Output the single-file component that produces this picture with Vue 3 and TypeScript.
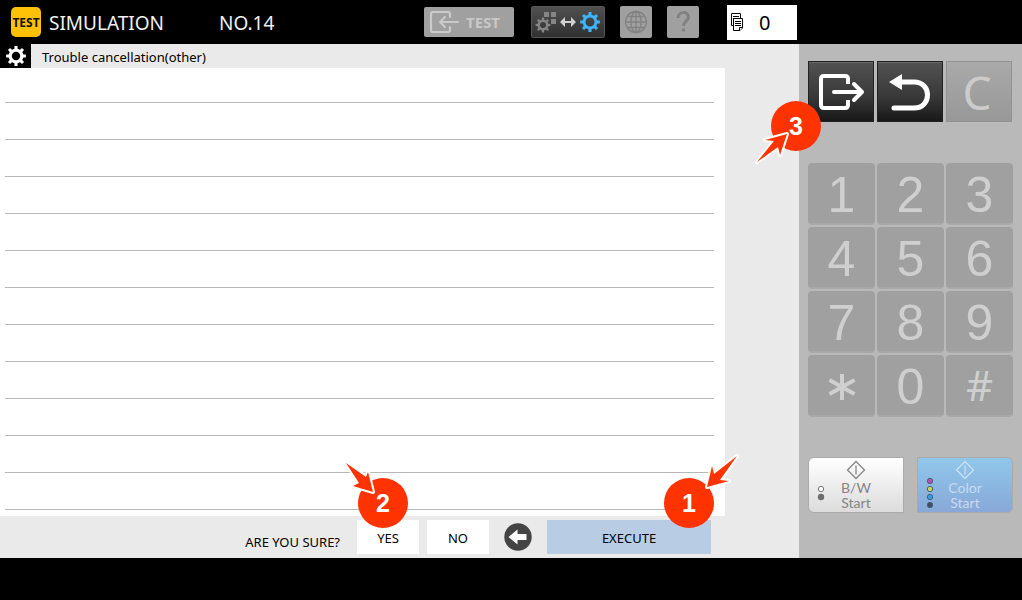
<script setup lang="ts">
interface Arrow {
  points: string
}

const rows = 12
const digits: string[] = ['1', '2', '3', '4', '5', '6', '7', '8', '9', '*', '0', '#']

const arrows: Record<'execute' | 'yes' | 'exit', Arrow> = {
  execute: { points: '73,-22 56,2 65,3 43,9 48,-12 50,-4' },
  yes: { points: '-12,-15 8,-1 10,-6 15,14 -5,8 1,5' },
  exit: { points: '-14,61 3,40 -6,39 16,33 9,54 7,46' },
}

// Outline of a cog centred on the origin, with a round hole.
function gear(outer: number, inner: number, hole: number): string {
  const teeth = 8
  const step = (Math.PI * 2) / teeth
  const points: string[] = []
  for (let i = 0; i < teeth; i++) {
    const a = i * step
    const corners: [number, number][] = [
      [inner, a - step * 0.27],
      [outer, a - step * 0.19],
      [outer, a + step * 0.19],
      [inner, a + step * 0.27],
    ]
    for (const [r, t] of corners) {
      points.push(`${(r * Math.cos(t)).toFixed(2)} ${(r * Math.sin(t)).toFixed(2)}`)
    }
  }
  return `M${points.join('L')}ZM${hole} 0A${hole} ${hole} 0 1 0 ${-hole} 0A${hole} ${hole} 0 1 0 ${hole} 0Z`
}
</script>

<template>
  <div class="panel">
    <header class="topbar">
      <span class="badge">TEST</span>
      <h1 class="title">SIMULATION</h1>
      <span class="number">NO.14</span>
      <div class="tools">
        <button class="tool test" type="button">
          <svg width="32" height="24" viewBox="0 0 32 24" fill="none" stroke="#cacaca" stroke-width="2.2" stroke-linecap="round" stroke-linejoin="round">
            <path d="M21 7V4Q21 2 19 2H4Q2 2 2 4V20Q2 22 4 22H19Q21 22 21 20V17" />
            <path d="M29 12H11M16 7L11 12L16 17" />
          </svg>
          <span>TEST</span>
        </button>
        <button class="tool switch" type="button" aria-label="Switch mode">
          <svg width="72" height="30" viewBox="0 0 72 30">
            <path :d="gear(7.5, 5.5, 3)" transform="translate(11 18)" fill="#858585" fill-rule="evenodd" />
            <path d="M12 5h5v5h-5zM19 5h5v5h-5zM19 12h5v5h-5z" fill="#858585" />
            <path d="M28 15L33 10V14H39V10L44 15L39 20V16H33V20Z" fill="#d0d0d0" />
            <path :d="gear(10, 7.5, 4.5)" transform="translate(58 15)" fill="#3db4fb" fill-rule="evenodd" />
          </svg>
        </button>
        <button class="tool square globe" type="button" aria-label="Language">
          <svg width="24" height="24" viewBox="0 0 24 24" fill="none" stroke="#818181" stroke-width="1.3">
            <circle cx="12" cy="12" r="10.5" />
            <ellipse cx="12" cy="12" rx="5" ry="10.5" />
            <path d="M12 1V23M1 12H23M3 6.500H21M3 17.500H21" />
          </svg>
        </button>
        <button class="tool square" type="button" aria-label="Help">
          <svg width="16" height="22" viewBox="0 0 16 22">
            <path d="M3 7C3 0 13.500 0 13.500 6C13.500 10 8.500 10.500 8.500 15" fill="none" stroke="#818181" stroke-width="3" />
            <circle cx="8.500" cy="19" r="1.800" fill="#818181" />
          </svg>
        </button>
      </div>
      <div class="counter">
        <svg width="13" height="19" viewBox="0 0 13 19" fill="#fff" stroke="#000">
          <path d="M.5 .5H9.500V12.500H.5Z" />
          <path d="M2 3.500H8M2 5.500H8" />
          <path d="M2.500 5.500H11.500V15L9 17.500H2.500Z" />
          <path d="M4 8.500H10M4 10.500H10M4 12.500H10M8.500 17.500V14.500H11.500" />
        </svg>
        <output class="count">0</output>
      </div>
    </header>

    <div class="body">
      <main class="work">
        <div class="heading">
          <span class="cog">
            <svg width="20" height="20" viewBox="-10 -10 20 20">
              <path :d="gear(10, 7.5, 4.2)" fill="#fff" fill-rule="evenodd" />
            </svg>
          </span>
          <h2>Trouble cancellation(other)</h2>
        </div>
        <ul class="sheet">
          <li v-for="n in rows" :key="n"></li>
        </ul>
        <div class="confirm">
          <span class="question">ARE YOU SURE?</span>
          <div class="anchor">
            <button class="choice" type="button">YES</button>
            <span class="marker on-yes">
              2
              <svg class="arrow" width="50" height="50" viewBox="0 0 50 50"><polygon :points="arrows.yes.points" /></svg>
            </span>
          </div>
          <button class="choice no" type="button">NO</button>
          <button class="back" type="button" aria-label="Back">
            <svg width="28" height="28" viewBox="0 0 28 28">
              <circle cx="14" cy="14" r="13.700" fill="#444" />
              <path d="M4.500 14L13.500 6.500V11H22.500V17H13.500V21.500Z" fill="#fff" />
            </svg>
          </button>
          <div class="anchor">
            <button class="choice execute" type="button">EXECUTE</button>
            <span class="marker on-execute">
              1
              <svg class="arrow" width="50" height="50" viewBox="0 0 50 50"><polygon :points="arrows.execute.points" /></svg>
            </span>
          </div>
        </div>
      </main>

      <aside class="keypad">
        <div class="keys">
          <div class="anchor">
            <button class="key" type="button" aria-label="Exit">
              <svg width="48" height="36" viewBox="0 0 48 36" fill="none" stroke="#fff" stroke-width="4" stroke-linecap="round" stroke-linejoin="round">
                <path d="M31 10V5Q31 2 28 2H7Q4 2 4 5V31Q4 34 7 34H28Q31 34 31 31V26" stroke-linecap="butt" />
                <path d="M17 18H45M37 10L45 18L37 26" />
              </svg>
            </button>
            <span class="marker on-exit">
              3
              <svg class="arrow" width="50" height="50" viewBox="0 0 50 50"><polygon :points="arrows.exit.points" /></svg>
            </span>
          </div>
          <button class="key" type="button" aria-label="Return">
            <svg width="42" height="38" viewBox="0 0 42 38">
              <path d="M12 9H25C43 9 43 35 25 35H5" fill="none" stroke="#fff" stroke-width="5" stroke-linecap="round" />
              <path d="M0 9L13 1V17Z" fill="#fff" />
            </svg>
          </button>
          <button class="key clear" type="button">C</button>
        </div>

        <div class="digits">
          <button v-for="d in digits" :key="d" class="digit" :class="{ hash: d === '#' }" type="button" :aria-label="d">
            <svg v-if="d === '*'" width="28" height="26" viewBox="0 0 28 26" stroke="#cfcfcf" stroke-width="4">
              <path d="M14 0V26M1.500 6L26.500 20M26.500 6L1.500 20" />
            </svg>
            <template v-else>{{ d }}</template>
          </button>
        </div>

        <div class="starts">
          <button class="start mono" type="button">
            <svg class="dots" width="8" height="16" viewBox="0 0 8 16">
              <circle cx="4" cy="4" r="2.700" fill="#fff" stroke="#777" />
              <circle cx="4" cy="12" r="3.200" fill="#6e6e6e" />
            </svg>
            <svg class="diamond" width="20" height="20" viewBox="0 0 20 20" fill="none" stroke="#858585" stroke-width="1.300">
              <path d="M10 1.500L18.500 10L10 18.500L1.500 10ZM10 5.500V14.500" />
            </svg>
            <span>B/W<br />Start</span>
          </button>
          <button class="start color" type="button">
            <svg class="dots" width="8" height="32" viewBox="0 0 8 32" stroke="#46647c">
              <circle cx="4" cy="4" r="2.700" fill="#b64fb0" />
              <circle cx="4" cy="12" r="2.700" fill="#ccd35f" />
              <circle cx="4" cy="20" r="2.700" fill="#369fe0" />
              <circle cx="4" cy="28" r="2.700" fill="#40505f" />
            </svg>
            <svg class="diamond" width="20" height="20" viewBox="0 0 20 20" fill="none" stroke="#cbe1f1" stroke-width="1.300">
              <path d="M10 1.500L18.500 10L10 18.500L1.500 10ZM10 5.500V14.500" />
            </svg>
            <span>Color<br />Start</span>
          </button>
        </div>
      </aside>
    </div>
  </div>
</template>

<style>
body {
  margin: 0;
  background: #000;
}
</style>

<style scoped>
* {
  box-sizing: border-box;
}

.panel {
  min-height: 100vh;
  background: #000;
  color: #000;
  font-family: "Noto Sans", "Open Sans", sans-serif;
  font-size: 13px;
}

button {
  display: flex;
  align-items: center;
  justify-content: center;
  margin: 0;
  padding: 0;
  border: 0;
  font: inherit;
  color: inherit;
}

svg {
  display: block;
  flex: none;
}

.topbar {
  display: flex;
  align-items: center;
  height: 44px;
  padding-left: 11px;
  color: #f0f0f0;
}

.badge {
  width: 30px;
  height: 30px;
  border-radius: 5px;
  background: #ffc107;
  color: #111;
  font-size: 12px;
  font-weight: 700;
  line-height: 32px;
  text-align: center;
}

.title {
  width: 170px;
  margin: 0 0 0 8px;
  font-size: 19px;
  font-weight: 400;
  line-height: 30px;
}

.number {
  width: 205px;
  font-size: 19px;
  line-height: 30px;
}

.title,
.number {
  padding-top: 2px;
}

.tools {
  display: flex;
  align-items: center;
  gap: 15px;
}

.tool {
  height: 32px;
  border-radius: 2px;
  background: #a0a0a0;
}

.test {
  justify-content: flex-start;
  gap: 5px;
  width: 90px;
  height: 30px;
  margin-right: 2px;
  padding-left: 5px;
  color: #c8c8c8;
  font-size: 15px;
  font-weight: 700;
}

.switch {
  width: 74px;
  border: 1px solid #555;
  background: linear-gradient(#505050, #303030);
}

.square {
  width: 32px;
}

.counter {
  display: flex;
  align-items: center;
  width: 70px;
  height: 35px;
  margin-left: 28px;
  padding-left: 4px;
  background: #fff;
  color: #000;
}

.count {
  margin-left: 15px;
  font-size: 20px;
}

.body {
  display: flex;
}

.work {
  display: flex;
  flex: 1;
  flex-direction: column;
  background: #eaeaea;
}

.heading {
  display: flex;
  height: 24px;
}

.cog {
  display: flex;
  align-items: center;
  justify-content: center;
  width: 31px;
  background: #000;
}

h2 {
  margin: 0 0 0 11px;
  font-size: 13px;
  font-weight: 400;
  line-height: 26px;
}

.sheet {
  flex: 1;
  margin: 0 74px 0 0;
  padding: 0 11px 6px 5px;
  background: #fff;
  list-style: none;
}

.sheet li {
  height: 37px;
  border-bottom: 1px solid #b8b8b8;
}

.sheet li:first-child {
  height: 35px;
}

.confirm {
  display: flex;
  align-items: center;
  justify-content: flex-end;
  padding: 4px 88px 4px 0;
}

.question {
  margin-right: 17px;
  padding-top: 10px;
}

.anchor {
  position: relative;
}

.choice {
  width: 62px;
  height: 34px;
  padding-top: 2px;
  background: #fff;
}

.no {
  margin-left: 8px;
}

.back {
  margin: 0 15px 0 15px;
  background: transparent;
}

.execute {
  width: 164px;
  background: #b8cce4;
}

.marker {
  position: absolute;
  z-index: 2;
  width: 50px;
  height: 50px;
  border-radius: 50%;
  background: #ff3300;
  color: #fff;
  font: 700 25px/51px "Liberation Sans", sans-serif;
  text-align: center;
  pointer-events: none;
}

.on-yes {
  top: -42px;
  left: 1px;
}

.on-execute {
  top: -42px;
  right: -3px;
}

.on-exit {
  top: 40px;
  left: -37px;
}

.arrow {
  position: absolute;
  top: 0;
  left: 0;
  overflow: visible;
  fill: #ff3300;
  stroke: #fff;
  stroke-width: 4;
  stroke-linejoin: round;
  paint-order: stroke;
}

.keypad {
  flex: 0 0 223px;
  padding: 17px 9px 45px;
  background: #b9b9b9;
}

.keys {
  display: grid;
  grid-template-columns: repeat(3, 1fr);
  gap: 3px;
  padding-right: 1px;
}

.key {
  width: 100%;
  height: 61px;
  border: 1px solid #222;
  background: linear-gradient(#525252, #383838 60%, #181818);
  box-shadow: inset 0 1px #666;
}

.clear {
  padding-right: 4px;
  border-color: #929292;
  background: linear-gradient(#a9a9a9, #989898);
  box-shadow: none;
  color: #cbcbcb;
  font-size: 46px;
  line-height: 58px;
}

.digits {
  display: grid;
  grid-template-columns: repeat(3, 1fr);
  gap: 2px;
  margin-top: 41px;
}

.digit {
  height: 62px;
  padding-top: 3px;
  border-radius: 4px;
  border-bottom: 2px solid #a9a9a9;
  background: #a0a0a0;
  color: #cfcfcf;
  font: 50px/60px "Liberation Sans", sans-serif;
}

.hash {
  padding-top: 0;
  font-family: "Noto Sans", sans-serif;
  font-size: 42px;
}

.starts {
  display: grid;
  grid-template-columns: 1fr 1fr;
  gap: 13px;
  margin-top: 40px;
}

.start {
  position: relative;
  flex-direction: column;
  height: 56px;
  border: 1px solid #aaa;
  font: 14px/15px Lato, sans-serif;
}

.mono {
  border-radius: 6px 0 0 6px;
  background: linear-gradient(#fff, #dcdcdc);
  color: #858585;
}

.color {
  border-radius: 0 6px 6px 0;
  background: linear-gradient(#90c7ea, #88a8d8);
  color: #c8daf0;
}

.dots {
  position: absolute;
  bottom: 11px;
  left: 8px;
}

.color .dots {
  bottom: 3px;
}
</style>
